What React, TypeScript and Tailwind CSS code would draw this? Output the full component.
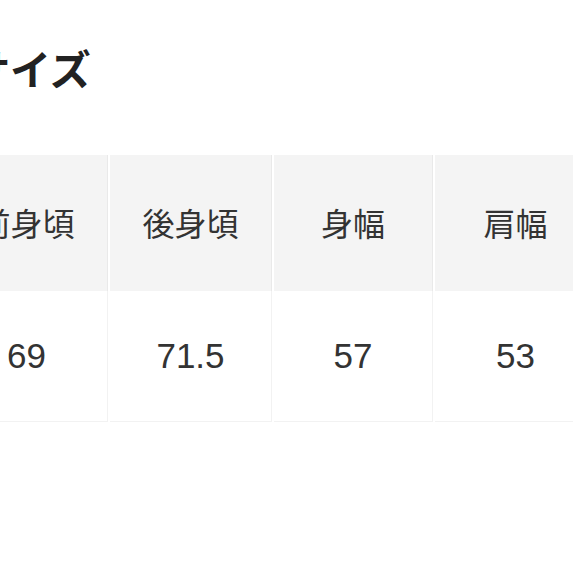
const heads = ["前身頃", "後身頃", "身幅", "肩幅"];
const values = ["69", "71.5", "57", "53"];

export default function App() {
  return (
    <div className="w-[573px] h-[573px] overflow-hidden bg-white text-[#333]">
      <h2
        className="ml-[-31px] mt-[42px] h-[52px] text-[41px] leading-[50px] font-bold text-[#222] whitespace-nowrap"
        style={{ fontFamily: '"Noto Sans CJK JP", sans-serif' }}
      >
        サイズ
      </h2>

      <div className="mt-[61px] ml-[-54px] w-[650px]">
        <div className="grid grid-cols-[162px_162px_159px_162px] gap-x-[2px]">
          {heads.map((h) => (
            <div
              key={h}
              className="h-[136px] flex items-center justify-center bg-[#f4f4f4] border-r border-[#e9e9e9] text-[32px] pb-[3px]"
              style={{ fontFamily: '"Noto Sans CJK JP", sans-serif' }}
            >
              {h}
            </div>
          ))}
          {values.map((v) => (
            <div
              key={v}
              className="h-[131px] flex items-center justify-center bg-white border-r border-b border-[#f2f2f2] text-[35px]"
              style={{ fontFamily: '"Liberation Sans", Arial, sans-serif' }}
            >
              {v}
            </div>
          ))}
        </div>
      </div>
    </div>
  );
}
